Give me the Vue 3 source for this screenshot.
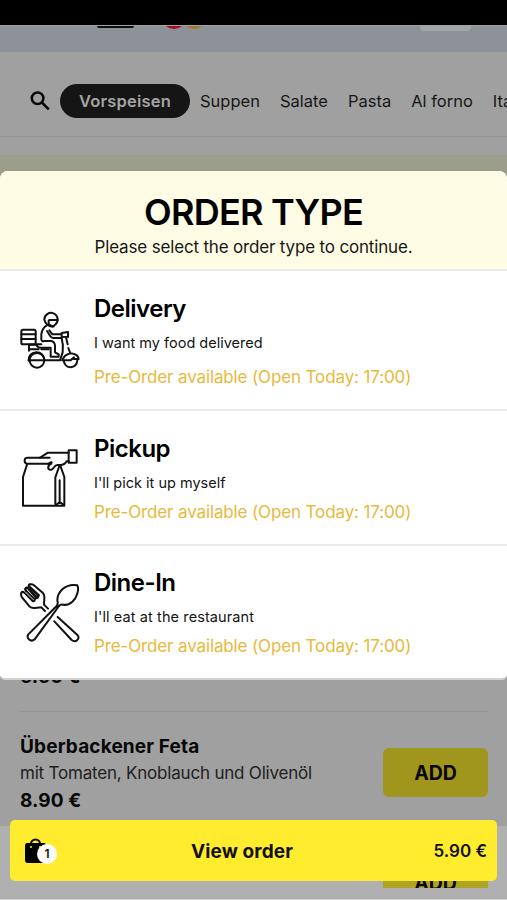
<template>
  <div class="screen">
    <div class="status-bar"></div>

    <div class="payments">
      <span class="payments__card"></span>
      <span class="payments__red"></span>
      <span class="payments__orange"></span>
      <span class="payments__light"></span>
    </div>

    <nav class="categories">
      <svg class="categories__search" viewBox="0 0 20 20">
        <circle cx="7.6" cy="7.3" r="5.8" />
        <path d="M11.8 11.5L18.8 18.4" />
      </svg>
      <a class="categories__item categories__item--active">Vorspeisen</a>
      <a v-for="category in categories" :key="category" class="categories__item">{{
        category
      }}</a>
    </nav>

    <div class="banner"></div>

    <main class="menu">
      <div class="menu__previous">6.50 €</div>
      <article class="dish">
        <div class="dish__info">
          <h3>Überbackener Feta</h3>
          <p>mit Tomaten, Knoblauch und Olivenöl</p>
          <strong>8.90 €</strong>
        </div>
        <button class="dish__add">ADD</button>
      </article>
    </main>

    <footer class="footer">
      <div class="footer__clip"><button class="dish__add">ADD</button></div>
    </footer>

    <section class="modal">
      <header class="modal__header">
        <h1>ORDER TYPE</h1>
        <p>Please select the order type to continue.</p>
      </header>
      <div
        v-for="type in orderTypes"
        :key="type.id"
        class="option"
        :class="`option--${type.id}`"
      >
        <svg v-if="type.id === 'delivery'" class="option__icon" viewBox="30 60 180 180">
          <rect x="34" y="119" width="43" height="44" rx="5" />
          <path d="M34 133H77M34 147H77" />
          <path d="M103 89A20 20 0 1 1 137 103L128 110Q108 108 103 89Z" />
          <path d="M143 90H119Q115 90 116 95V101Q120 108 131 109" />
          <path d="M110 107Q98 112 94 132V149Q95 155 103 153H124Q134 155 135 167V187L146 193V200H122V173H92Q80 173 80 163H94" />
          <path d="M111 123L121 139Q124 144 130 144H155M118 121L127 133H154" />
          <path d="M155 129L174 126V141L155 140ZM168 142L173 163" />
          <path d="M155 145Q161 166 158 187L150 211H104" />
          <path d="M77 164H57V182M61 178H86M94 178H116M56 212Q55 190 79 187Q100 187 104 211" />
          <path d="M175 174L181 190Q162 195 157 211M181 190Q205 192 206 207L189 207" />
          <circle cx="81" cy="211" r="22" />
          <path d="M56 211H104M161 212Q165 232 182 232Q200 230 202 211M157 211H182L192 202" />
        </svg>
        <svg v-else-if="type.id === 'pickup'" class="option__icon" viewBox="30 51 180 180">
          <path d="M52 98L39 138V224H163V138L151 104M124 98H50Q43 96 44 87Q45 80 53 80H119" />
          <path d="M90 80L114 65H176M176 91H170Q164 102 151 102H144Q137 101 132 109Q123 121 116 114Q112 109 119 101L125 94Q113 96 116 103" />
          <rect x="176" y="58" width="24" height="37" />
          <path d="M148 105L136 139V219M149 148V216M139 221L149 213L160 221" />
        </svg>
        <svg v-else class="option__icon" viewBox="30 51 180 180">
          <path d="M35 79Q31 86 36 94L59 122Q64 127 75 126L94 124L105 135M59 56Q65 53 71 57L98 80Q104 85 103 96L102 116L114 128" />
          <path d="M35 79Q38 76 43 80L68 105Q75 107 74 100L48 74Q43 65 52 65L79 96Q86 97 83 88L58 64Q53 57 60 55" />
          <path d="M48 75Q43 69 49 65Q52 64 56 69L81 94M60 63L87 88Q85 95 77 98" />
          <path d="M55 205L140 120Q145 114 142 103Q142 84 157 70Q176 53 202 58Q209 73 195 98Q180 120 159 116Q152 114 147 120L74 220Q65 228 56 219Q50 212 55 205Z" />
          <path d="M143 153L203 208Q209 216 201 223Q194 229 185 222L133 166" />
        </svg>
        <div class="option__text">
          <h2>{{ type.title }}</h2>
          <p>{{ type.text }}</p>
          <span>Pre-Order available (Open Today: 17:00)</span>
        </div>
      </div>
    </section>

    <button class="order-bar">
      <span class="order-bar__bag">
        <svg viewBox="0 0 22 26">
          <path class="order-bar__handle" d="M6 8V6a4.5 4.5 0 0 1 9 0v2" />
          <path d="M2 5H19Q21 5 21 8V25H3Q0 25 0 22V8Q0 5 2 5Z" />
          <circle class="order-bar__hole" cx="6" cy="9" r="1" />
          <circle class="order-bar__hole" cx="15" cy="9" r="1" />
        </svg>
        <span class="order-bar__count">1</span>
      </span>
      <span class="order-bar__label">View order</span>
      <span class="order-bar__total">5.90 €</span>
    </button>
  </div>
</template>

<script setup>
const categories = ["Suppen", "Salate", "Pasta", "Al forno", "Italienische"];

const orderTypes = [
  { id: "delivery", title: "Delivery", text: "I want my food delivered" },
  { id: "pickup", title: "Pickup", text: "I'll pick it up myself" },
  { id: "dine-in", title: "Dine-In", text: "I'll eat at the restaurant" },
];
</script>

<style>
body {
  margin: 0;
}
</style>

<style scoped>
.screen {
  position: relative;
  display: flex;
  flex-direction: column;
  width: 507px;
  height: 900px;
  overflow: hidden;
  background: #a0a0a0;
  color: #080808;
  font-family: Inter, "Liberation Sans", sans-serif;
}

h1,
h2,
h3,
p {
  margin: 0;
}

button {
  padding: 0;
  border: 0;
  color: inherit;
  font-family: inherit;
}

.status-bar {
  flex: none;
  height: 25px;
  background: #000;
}

.payments {
  display: flex;
  flex: none;
  align-items: flex-start;
  box-sizing: border-box;
  height: 27px;
  padding-left: 97px;
  overflow: hidden;
  border-top: 1px solid #a0a2a5;
  background: #8d9198;
}

.payments__card {
  width: 37px;
  height: 2px;
  border-radius: 0 0 3px 3px;
  background: #090b0e;
}

.payments__red,
.payments__orange {
  width: 24px;
  height: 24px;
  margin-top: -21px;
  border-radius: 50%;
  background: #a30d20;
}

.payments__red {
  margin-left: 28px;
}

.payments__orange {
  margin-left: -4px;
  background: #a6762b;
}

.payments__light {
  width: 51px;
  height: 5px;
  margin-left: 214px;
  border-radius: 0 0 4px 4px;
  background: #a3a4a5;
}

.categories {
  display: flex;
  flex: none;
  align-items: center;
  box-sizing: border-box;
  height: 85px;
  padding: 13px 0 0 30px;
  border-bottom: 1px solid #959595;
  white-space: nowrap;
}

.categories__search {
  flex: none;
  width: 20px;
  height: 20px;
  margin-right: 10px;
  fill: none;
  stroke: #080808;
  stroke-width: 2.5;
}

.categories__item {
  flex: none;
  margin-right: 20px;
  color: #171717;
  font-size: 16.5px;
}

.categories__item--active {
  width: 130px;
  margin-right: 10px;
  border-radius: 17px;
  background: #151515;
  color: #a4a4a4;
  font-weight: 600;
  letter-spacing: 0.2px;
  line-height: 34px;
  text-align: center;
}

.banner {
  flex: none;
  height: 45px;
  margin-top: 18px;
  background: #9c9d8b;
}

.menu {
  flex: none;
  height: 626px;
  padding: 0 19px 0 20px;
  margin-top: 464px;
}

.menu__previous {
  height: 47px;
  border-bottom: 1px solid #939393;
  font-size: 19px;
  font-weight: 700;
  line-height: 25px;
}

.dish {
  display: flex;
  align-items: center;
  justify-content: space-between;
  height: 123px;
}

.dish__info {
  flex: none;
}

.dish__info h3 {
  font-size: 19px;
  font-weight: 650;
  letter-spacing: 0.15px;
  line-height: 27px;
}

.dish__info p {
  color: #202020;
  font-size: 17px;
  letter-spacing: -0.2px;
  line-height: 27px;
}

.dish__info strong {
  display: block;
  font-size: 19px;
  font-weight: 650;
  letter-spacing: 0.1px;
  line-height: 27px;
}

.dish__add {
  flex: none;
  width: 105px;
  height: 49px;
  border-radius: 6px;
  background: #a0961d;
  font-size: 19.5px;
  font-weight: 700;
}

.dish .dish__add {
  margin-bottom: 2px;
}

/* dimmed strip behind the order bar */
.footer {
  position: absolute;
  right: 0;
  bottom: 0;
  left: 0;
  display: flex;
  justify-content: flex-end;
  box-sizing: border-box;
  height: 74px;
  padding: 32px 19px 0 0;
  border-bottom: 1px solid #d0d0d0;
  background: #b0b0b0;
}

.footer__clip {
  height: 30px;
  overflow: hidden;
}

.footer .dish__add {
  background: #afa423;
}

.modal {
  position: absolute;
  top: 171px;
  right: 0;
  left: 0;
  height: 509px;
  box-sizing: border-box;
  overflow: hidden;
  border-bottom: 2px solid #d2d2d2;
  border-radius: 8px 8px 5px 5px;
  background: #fff;
  color: #000;
}

.modal__header {
  box-sizing: border-box;
  height: 100px;
  padding-top: 20px;
  border-bottom: 2px solid #e8ebec;
  background: #fffce6;
  text-align: center;
}

.modal__header h1 {
  font-size: 36px;
  font-weight: 600;
  letter-spacing: -0.75px;
  line-height: 42px;
}

.modal__header p {
  color: #171713;
  font-size: 17px;
  letter-spacing: -0.17px;
  line-height: 29px;
}

.option {
  display: flex;
  align-items: center;
  box-sizing: border-box;
  height: 135px;
  padding-left: 20px;
  border-bottom: 2px solid #e8ebec;
}

.option--delivery {
  height: 140px;
}

.option--delivery .option__text span {
  margin-top: 5px;
}

.option--dine-in {
  height: 133px;
  border-bottom: 0;
}

.option__icon {
  flex: none;
  width: 60px;
  height: 60px;
  margin-right: 14px;
  fill: none;
  stroke: #111;
  stroke-linecap: round;
  stroke-linejoin: round;
  stroke-width: 6;
}

.option__text {
  padding-top: 3px;
}

.option--dine-in .option__text {
  padding-top: 0;
}

.option__text h2 {
  font-size: 24px;
  font-weight: 600;
  letter-spacing: -0.5px;
  line-height: 34px;
}

.option__text p {
  color: #151515;
  font-size: 14.5px;
  line-height: 33px;
}

.option--dine-in p {
  letter-spacing: 0.1px;
}

.option__text span {
  display: block;
  color: #e8b93c;
  font-size: 17px;
  letter-spacing: -0.13px;
  line-height: 27px;
}

.order-bar {
  position: absolute;
  bottom: 19px;
  left: 10px;
  display: grid;
  grid-template-columns: 62px 1fr 90px;
  align-items: center;
  box-sizing: border-box;
  width: 487px;
  height: 61px;
  padding: 1px 10px 0 15px;
  border-radius: 5px;
  background: #ffec2f;
  color: #12110a;
}

.order-bar__bag {
  display: flex;
  align-items: center;
}

.order-bar__bag svg {
  width: 22px;
  height: 26px;
}

.order-bar__handle {
  fill: none;
  stroke: #080808;
  stroke-width: 2;
}

.order-bar__hole {
  fill: #ffec2f;
}

.order-bar__count {
  width: 20px;
  height: 20px;
  margin: 6px 0 0 -10px;
  border-radius: 50%;
  background: #fff;
  font-size: 12px;
  font-weight: 600;
  line-height: 20px;
  text-align: center;
}

.order-bar__label {
  font-size: 19px;
  font-weight: 650;
  letter-spacing: 0.1px;
}

.order-bar__total {
  font-size: 17px;
  font-weight: 600;
  text-align: right;
}
</style>
